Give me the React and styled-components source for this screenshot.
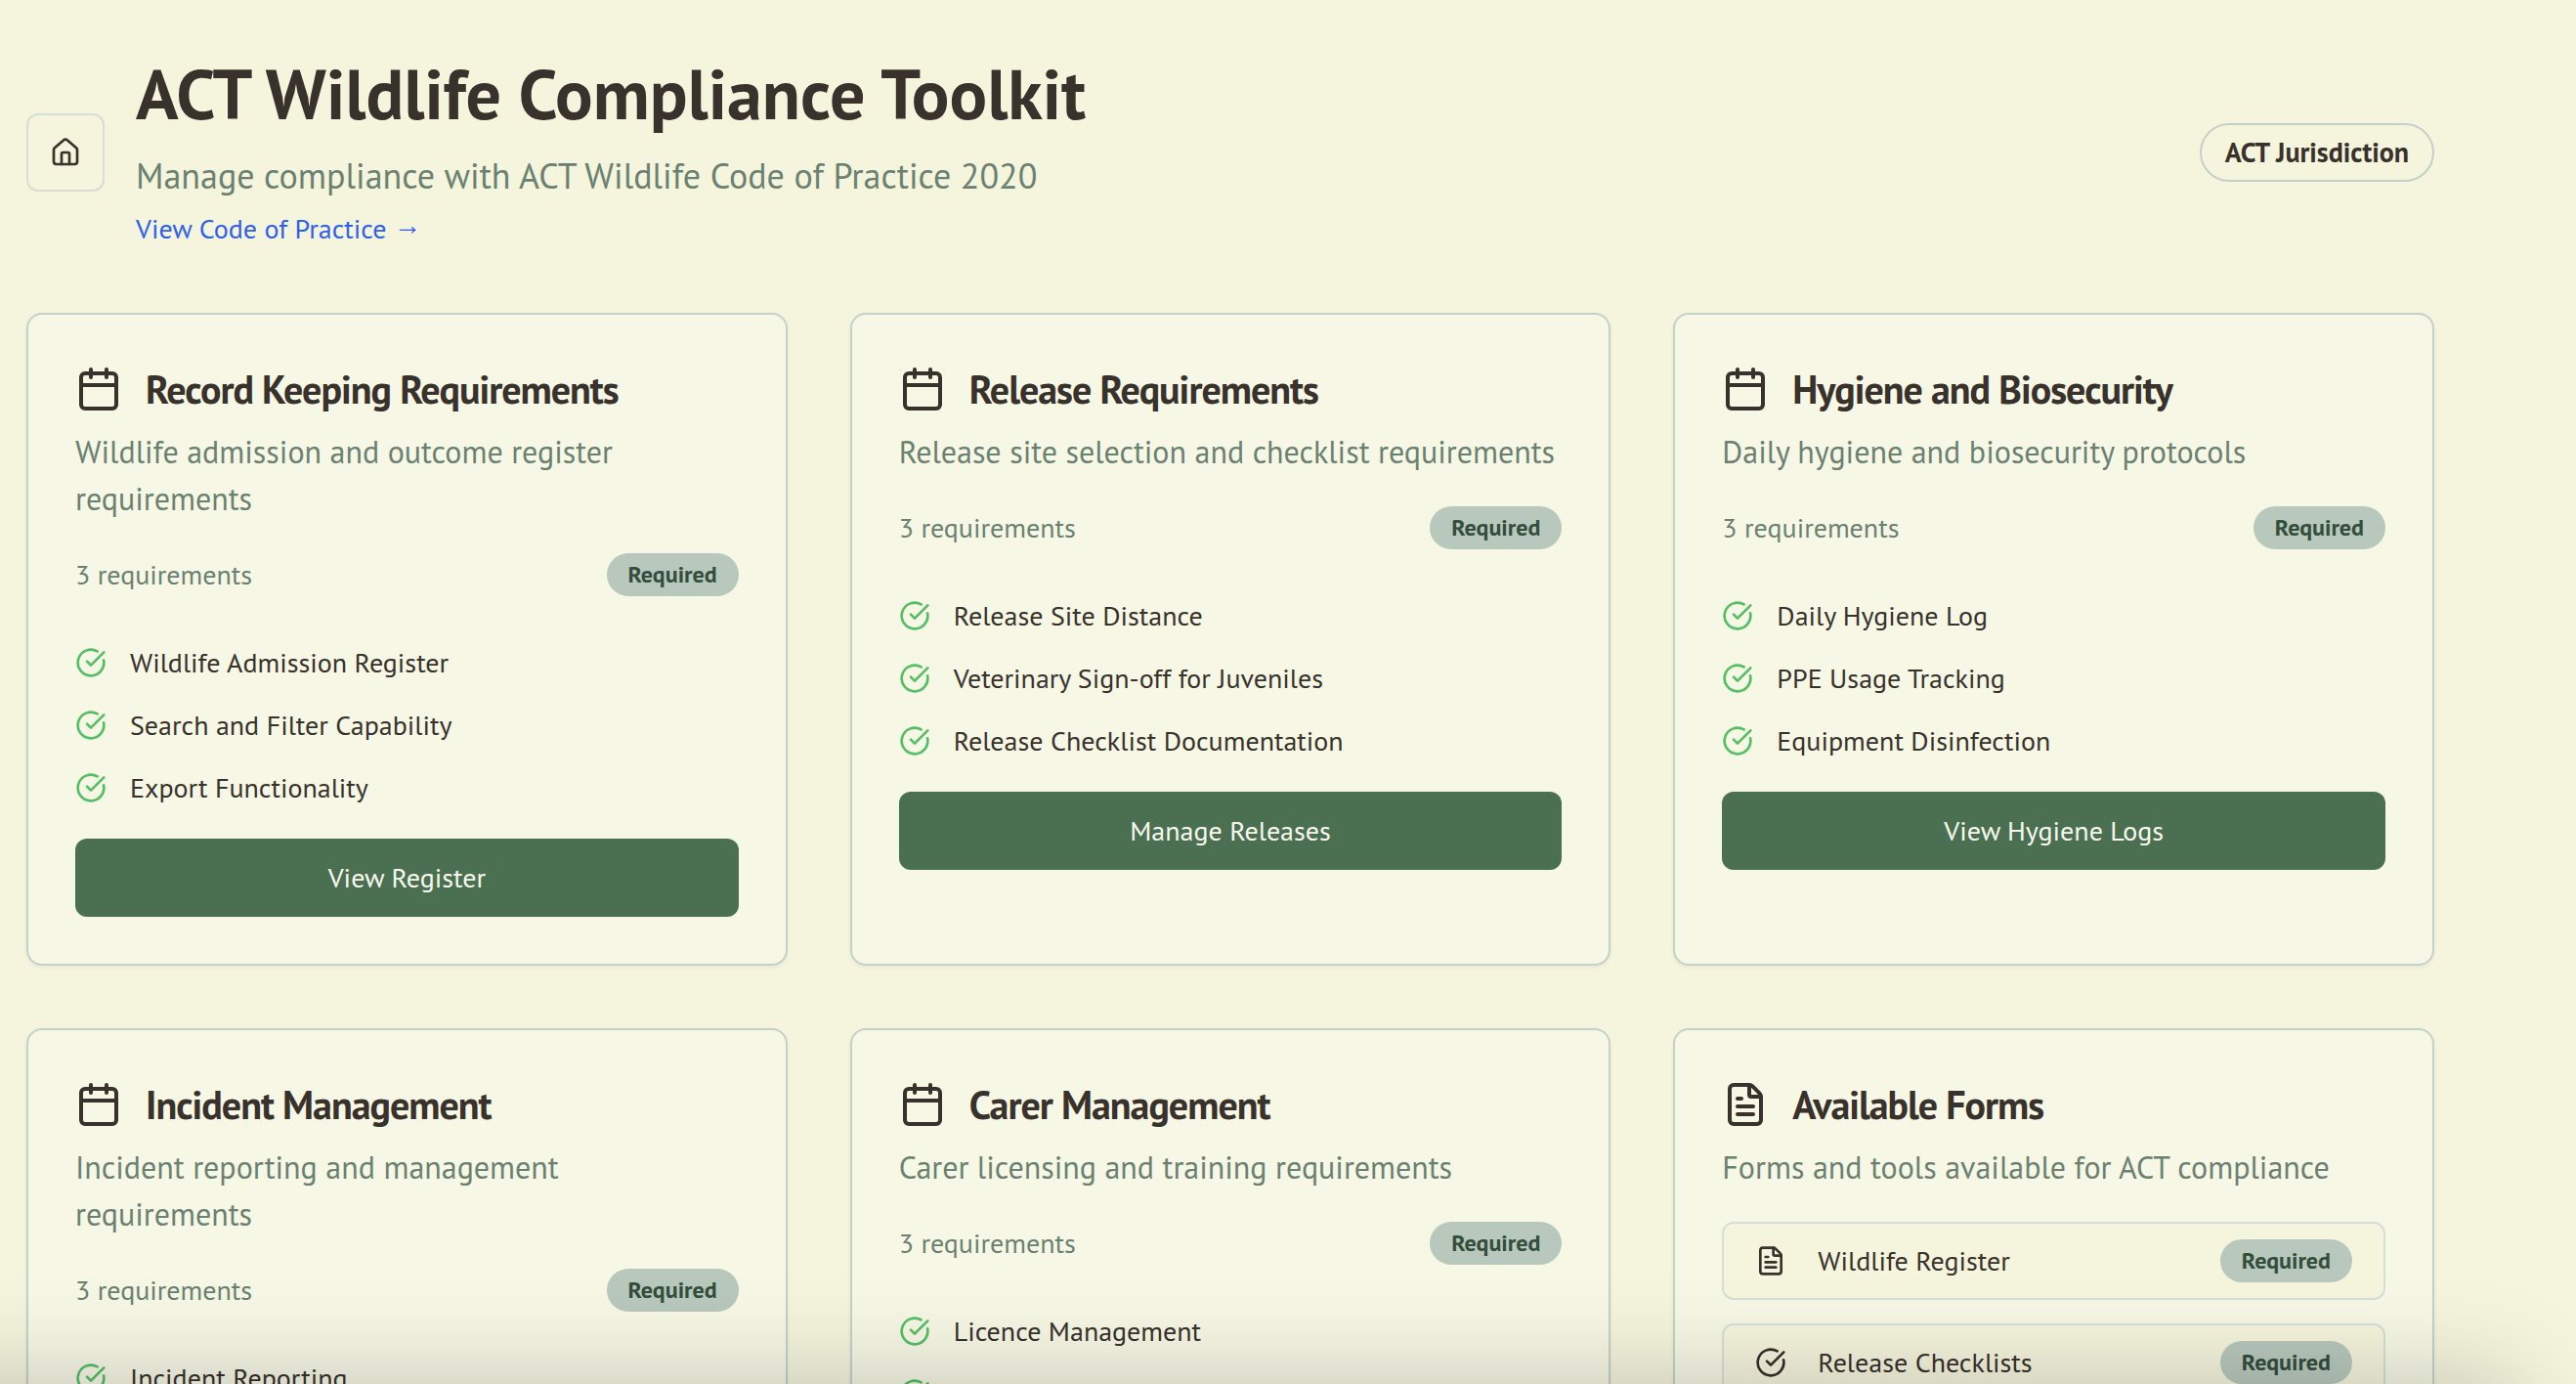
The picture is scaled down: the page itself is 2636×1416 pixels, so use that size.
import React from 'react';
import styled, { createGlobalStyle } from 'styled-components';
import { Calendar, CircleCheckBig, FileText, House } from 'lucide-react';

const ink = '#38312c';
const muted = '#6a8172';
const cream = '#f5f4dc';

const cards = [
  {
    title: 'Record Keeping Requirements',
    description: 'Wildlife admission and outcome register requirements',
    items: [
      'Wildlife Admission Register',
      'Search and Filter Capability',
      'Export Functionality',
    ],
    action: 'View Register',
  },
  {
    title: 'Release Requirements',
    description: 'Release site selection and checklist requirements',
    items: [
      'Release Site Distance',
      'Veterinary Sign-off for Juveniles',
      'Release Checklist Documentation',
    ],
    action: 'Manage Releases',
  },
  {
    title: 'Hygiene and Biosecurity',
    description: 'Daily hygiene and biosecurity protocols',
    items: ['Daily Hygiene Log', 'PPE Usage Tracking', 'Equipment Disinfection'],
    action: 'View Hygiene Logs',
  },
  {
    title: 'Incident Management',
    description: 'Incident reporting and management requirements',
    items: ['Incident Reporting'],
  },
  {
    title: 'Carer Management',
    description: 'Carer licensing and training requirements',
    items: ['Licence Management', ''],
  },
];

const forms = [
  { name: 'Wildlife Register', icon: FileText },
  { name: 'Release Checklists', icon: CircleCheckBig },
];

const RequirementCard = ({ title, description, items, action }) => (
  <Card>
    <CardTitle>
      <Calendar size={48} />
      {title}
    </CardTitle>
    <Description>{description}</Description>
    <Meta>
      <span>3 requirements</span>
      <Required>Required</Required>
    </Meta>
    <Requirements>
      {items.map(item => (
        <Requirement key={item}>
          <CircleCheckBig size={32} />
          {item}
        </Requirement>
      ))}
    </Requirements>
    {action && <Action>{action}</Action>}
  </Card>
);

const FormsCard = () => (
  <Card>
    <CardTitle>
      <FileText size={48} />
      Available Forms
    </CardTitle>
    <Description>Forms and tools available for ACT compliance</Description>
    <FormList>
      {forms.map(({ name, icon: Icon }) => (
        <FormRow key={name}>
          <Icon size={32} />
          <FormName>{name}</FormName>
          <Required>Required</Required>
        </FormRow>
      ))}
    </FormList>
  </Card>
);

const App = () => (
  <Page>
    <GlobalStyle />
    <Header>
      <HomeButton aria-label="Home">
        <House size={32} />
      </HomeButton>
      <Heading>
        <Title>ACT Wildlife Compliance Toolkit</Title>
        <Subtitle>Manage compliance with ACT Wildlife Code of Practice 2020</Subtitle>
        <CodeLink href="#code">
          View Code of Practice <Arrow>→</Arrow>
        </CodeLink>
      </Heading>
      <Jurisdiction>ACT Jurisdiction</Jurisdiction>
    </Header>
    <Grid>
      {cards.map(card => (
        <RequirementCard key={card.title} {...card} />
      ))}
      <FormsCard />
    </Grid>
    <BottomShade />
  </Page>
);

export default App;

const GlobalStyle = createGlobalStyle`
  *, *::before, *::after {
    box-sizing: border-box;
  }

  body {
    margin: 0;
    background: ${cream};
  }
`;

const Page = styled.div`
  position: relative;
  height: 1416px;
  padding: 56px 145px 0 27px;
  overflow: hidden;
  background: ${cream};
  color: ${ink};
  font-family: 'PT Sans', 'Open Sans', sans-serif;
  font-size: 28px;
  line-height: 40px;

  svg {
    flex-shrink: 0;
  }
`;

const Header = styled.header`
  display: flex;
  align-items: center;
  height: 200px;
  margin-bottom: 64px;
`;

const HomeButton = styled.button`
  display: flex;
  align-items: center;
  justify-content: center;
  width: 80px;
  height: 80px;
  padding: 0;
  border: 2px solid #d5dfd8;
  border-radius: 12px;
  background: ${cream};
  color: ${ink};
`;

const Heading = styled.div`
  flex: 1;
  margin-left: 32px;
`;

const Title = styled.h1`
  margin: 0;
  font-size: 72px;
  font-weight: 700;
  line-height: 80px;
`;

const Subtitle = styled.p`
  margin: 16px 0 6px;
  color: ${muted};
  font-size: 36px;
  line-height: 56px;
`;

const CodeLink = styled.a`
  display: block;
  height: 42px;
  color: #2f60ea;
  text-decoration: none;
`;

const Arrow = styled.span`
  font-family: 'Liberation Sans', sans-serif;
  font-size: 28px;
  font-weight: 700;
  line-height: 1;
  vertical-align: 4px;
`;

const Jurisdiction = styled.div`
  display: flex;
  align-items: center;
  height: 60px;
  padding: 0 24px;
  border: 2px solid #c4d1ca;
  border-radius: 30px;
  font-weight: 700;
`;

const Grid = styled.main`
  display: grid;
  grid-template-columns: repeat(3, 1fr);
  grid-auto-rows: 668px;
  gap: 64px;
`;

const Card = styled.section`
  padding: 48px;
  border: 2px solid #c4d1ca;
  border-radius: 16px;
  background: #f6f7e4;
  box-shadow: 0 2px 4px rgba(0, 0, 0, 0.05);
`;

const CardTitle = styled.h2`
  display: flex;
  align-items: center;
  gap: 24px;
  margin: 0 0 12px;
  font-size: 40px;
  font-weight: 700;
  line-height: 56px;
  letter-spacing: -0.025em;
`;

const Description = styled.p`
  margin: 0 0 32px;
  color: ${muted};
  font-size: 32px;
  line-height: 48px;
`;

const Meta = styled.div`
  display: flex;
  align-items: center;
  justify-content: space-between;
  height: 44px;
  margin-bottom: 48px;
  color: ${muted};
`;

const Required = styled.span`
  display: flex;
  align-items: center;
  height: 44px;
  padding: 0 22px;
  border-radius: 22px;
  background: #b8c8bc;
  color: #344e3c;
  font-size: 24px;
  font-weight: 700;
`;

const Requirements = styled.ul`
  display: flex;
  flex-direction: column;
  gap: 24px;
  margin: 0 0 32px;
  padding: 0;
  list-style: none;
`;

const Requirement = styled.li`
  display: flex;
  align-items: center;
  gap: 24px;
  height: 40px;

  svg {
    color: #55bf66;
  }
`;

const Action = styled.button`
  display: block;
  width: 100%;
  height: 80px;
  padding: 0;
  border: 0;
  border-radius: 12px;
  background: #4a7051;
  color: #f8f8ee;
  font: inherit;
`;

const FormList = styled.div`
  display: flex;
  flex-direction: column;
  gap: 24px;
`;

const FormRow = styled.div`
  display: flex;
  align-items: center;
  height: 80px;
  padding: 0 32px;
  border: 2px solid #d5dfd8;
  border-radius: 12px;
  background: ${cream};
`;

const FormName = styled.span`
  flex: 1;
  margin-left: 32px;
`;

const BottomShade = styled.div`
  position: absolute;
  top: 100%;
  left: -200px;
  right: 60px;
  height: 400px;
  box-shadow: 0 0 100px rgba(0, 0, 0, 0.22);
  pointer-events: none;
`;
